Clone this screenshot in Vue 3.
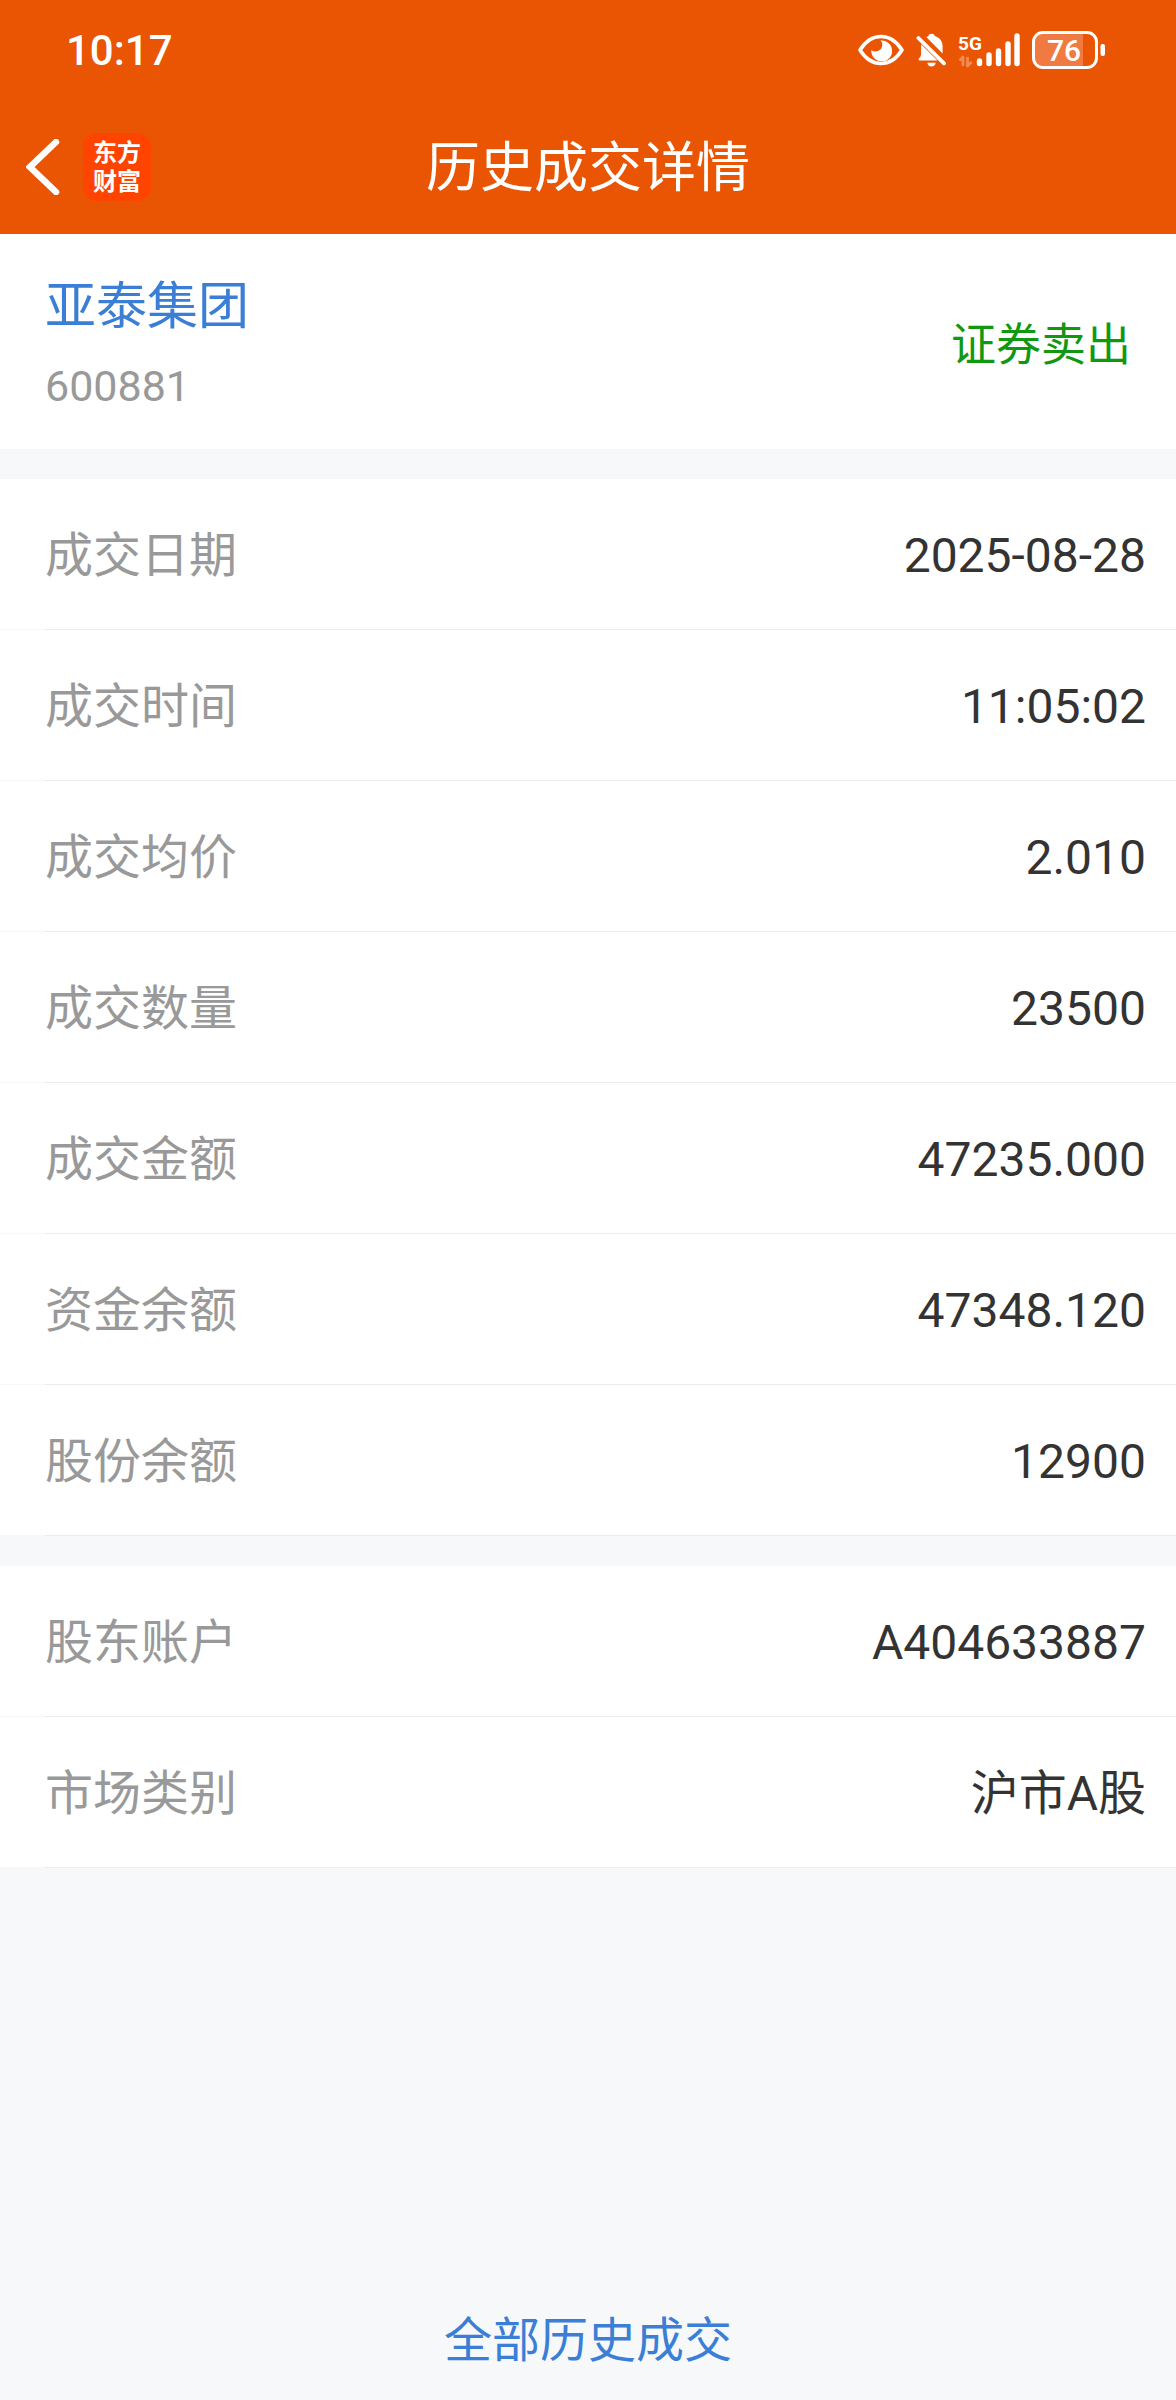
<template>
  <div class="page">
    <header class="header">
      <div class="status-bar">
        <time class="clock">10:17</time>
        <div class="status-icons">
          <svg width="46" height="32" viewBox="0 0 46 32" fill="none" aria-hidden="true">
            <path
              d="M2 16C7 8 14 2.5 23 2.5S39 8 44 16C39 24 32 29.5 23 29.5S7 24 2 16Z"
              stroke="#fff"
              stroke-width="3.6"
              stroke-linejoin="round"
            />
            <path
              d="M22.5 6.6A10.4 10.4 0 1 1 13.3 16.2C17 18.5 21.5 17.5 23.5 14C25 11.3 24.5 8.5 22.5 6.6Z"
              fill="#fff"
            />
          </svg>

          <svg width="30" height="34" viewBox="0 0 30 34" fill="none" aria-hidden="true">
            <path
              d="M10.5 4.2C11.5 3.6 12 3.3 12.3 3.2C12.6 1.5 13.9 .7 15.5 .7S18.4 1.5 18.8 3.1C23.6 4.6 26.6 8.5 26.6 13.2V20.6Z"
              fill="#fff"
            />
            <path
              d="M5.1 11.2L21.5 27.6H3.6C2.5 27.6 2.2 26.2 3 25.5C4.6 24 5.1 22.5 5.1 20.5Z"
              fill="#fff"
            />
            <path d="M11.2 29.8H19.8C19 32.4 17.6 33.6 15.5 33.6S12 32.4 11.2 29.8Z" fill="#fff" />
            <path d="M2.4 5L28 30.3" stroke="#fff" stroke-width="3.8" stroke-linecap="round" />
          </svg>

          <svg class="signal" width="62" height="40" viewBox="0 0 62 40" fill="none" aria-label="5G">
            <text x="0" y="20" class="network">5G</text>
            <path
              d="M1.5 30.5L5 27V36M9.5 27V36L13.5 32"
              stroke="#f58a55"
              stroke-width="2.8"
              stroke-linejoin="round"
            />
            <path
              d="M21.5 31V33.5M31 25V33.5M40.5 21V33.5M50 14V33.5M59 6V33.5"
              stroke="#fff"
              stroke-width="5.4"
              stroke-linecap="round"
            />
          </svg>

          <svg width="73" height="38" viewBox="0 0 73 38" fill="none" aria-label="76%">
            <path d="M11 3H51V35H11A8 8 0 0 1 3 27V11A8 8 0 0 1 11 3Z" fill="#f07a41" />
            <rect x="1.5" y="1.5" width="63" height="35" rx="9.5" stroke="#fff" stroke-width="3" />
            <rect x="68.5" y="13" width="4.5" height="12" rx="2" fill="#fff" />
            <text x="32" y="30" text-anchor="middle" class="battery-level">76</text>
          </svg>
        </div>
      </div>

      <nav class="nav-bar">
        <div class="nav-left">
          <button class="back-btn" type="button" aria-label="返回">
            <svg width="34" height="56" viewBox="0 0 34 56" fill="none">
              <path
                d="M30 3L4 28L30 53"
                stroke="#fff"
                stroke-width="6.5"
                stroke-linejoin="miter"
                stroke-linecap="round"
              />
            </svg>
          </button>
          <div class="logo">东方财富</div>
        </div>
        <h1 class="title">历史成交详情</h1>
      </nav>
    </header>

    <main class="content">
      <section class="stock">
        <div>
          <h2 class="stock-name">亚泰集团</h2>
          <p class="stock-code">600881</p>
        </div>
        <span class="direction">证券卖出</span>
      </section>

      <dl v-for="(group, index) in groups" :key="index" class="group">
        <div v-for="item in group" :key="item.label" class="row">
          <div class="row-inner">
            <dt>{{ item.label }}</dt>
            <dd>{{ item.value }}</dd>
          </div>
        </div>
      </dl>
    </main>

    <footer class="footer">
      <a href="#" class="all-link">全部历史成交</a>
    </footer>
  </div>
</template>

<script setup>
// 成交明细
const trade = [
  { label: "成交日期", value: "2025-08-28" },
  { label: "成交时间", value: "11:05:02" },
  { label: "成交均价", value: "2.010" },
  { label: "成交数量", value: "23500" },
  { label: "成交金额", value: "47235.000" },
  { label: "资金余额", value: "47348.120" },
  { label: "股份余额", value: "12900" },
];

// 账户信息
const account = [
  { label: "股东账户", value: "A404633887" },
  { label: "市场类别", value: "沪市A股" },
];

const groups = [trade, account];
</script>

<style>
body {
  margin: 0;
  background: #f6f8fa;
}
</style>

<style scoped>
.page {
  display: flex;
  flex-direction: column;
  min-height: 100vh;
  background: #f6f8fa;
  color: #333;
  font-family: Roboto, "Noto Sans CJK SC", sans-serif;
}

/* --- 顶部 --- */
.header {
  background: #ea5503;
  color: #fff;
}
.status-bar {
  display: flex;
  align-items: center;
  justify-content: space-between;
  height: 100px;
  padding: 0 71px 0 66px;
}
.clock {
  font-size: 42px;
  font-weight: 500;
}
.status-icons {
  display: flex;
  align-items: center;
  gap: 12px;
}
.signal {
  overflow: visible;
}
.network {
  fill: #fff;
  font-size: 19px;
  font-weight: 700;
}
.battery-level {
  fill: #fff;
  font-size: 30px;
  font-weight: 500;
}
.nav-bar {
  display: grid;
  grid-template-columns: 1fr auto 1fr;
  align-items: center;
  height: 134px;
  padding: 0 26px;
}
.nav-left {
  display: flex;
  align-items: center;
  gap: 23px;
}
.back-btn {
  display: flex;
  padding: 0;
  border: none;
  background: none;
  cursor: pointer;
}
.logo {
  box-sizing: border-box;
  width: 68px;
  height: 68px;
  padding: 3px 10px;
  border-radius: 14px;
  background: #ff4400;
  font-family: "Noto Sans CJK SC", sans-serif;
  font-size: 24px;
  font-weight: 700;
  line-height: 29px;
}
.title {
  margin: 0;
  padding-top: 4px;
  font-size: 54px;
  font-weight: 400;
  line-height: 80px;
}

/* --- 证券 --- */
.stock {
  display: flex;
  align-items: center;
  justify-content: space-between;
  padding: 42px 45px 33px;
  background: #fff;
}
.stock-name {
  margin: 0 0 18px;
  color: #3a7fd5;
  font-size: 51px;
  font-weight: 400;
  line-height: 62px;
}
.stock-code {
  margin: 0;
  color: #999;
  font-size: 43px;
  line-height: 60px;
}
.direction {
  color: #109910;
  font-size: 45px;
  line-height: 60px;
}

/* --- 明细列表 --- */
.group {
  margin: 30px 0 0;
}
.row {
  padding-left: 45px;
  background: linear-gradient(#f6f8fa, #f6f8fa) left bottom / 45px 1px no-repeat #fff;
}
.row-inner {
  display: flex;
  align-items: center;
  justify-content: space-between;
  padding: 42px 30px 38px 0;
  border-bottom: 1px solid #ececec;
  font-size: 48px;
  line-height: 70px;
}
dt {
  color: #999;
}
dd {
  margin: 0;
}

/* --- 底部 --- */
.footer {
  margin-top: auto;
  padding: 30px 0 24px;
  text-align: center;
}
.all-link {
  color: #3a7fd5;
  font-size: 48px;
  line-height: 70px;
  text-decoration: none;
}
</style>
